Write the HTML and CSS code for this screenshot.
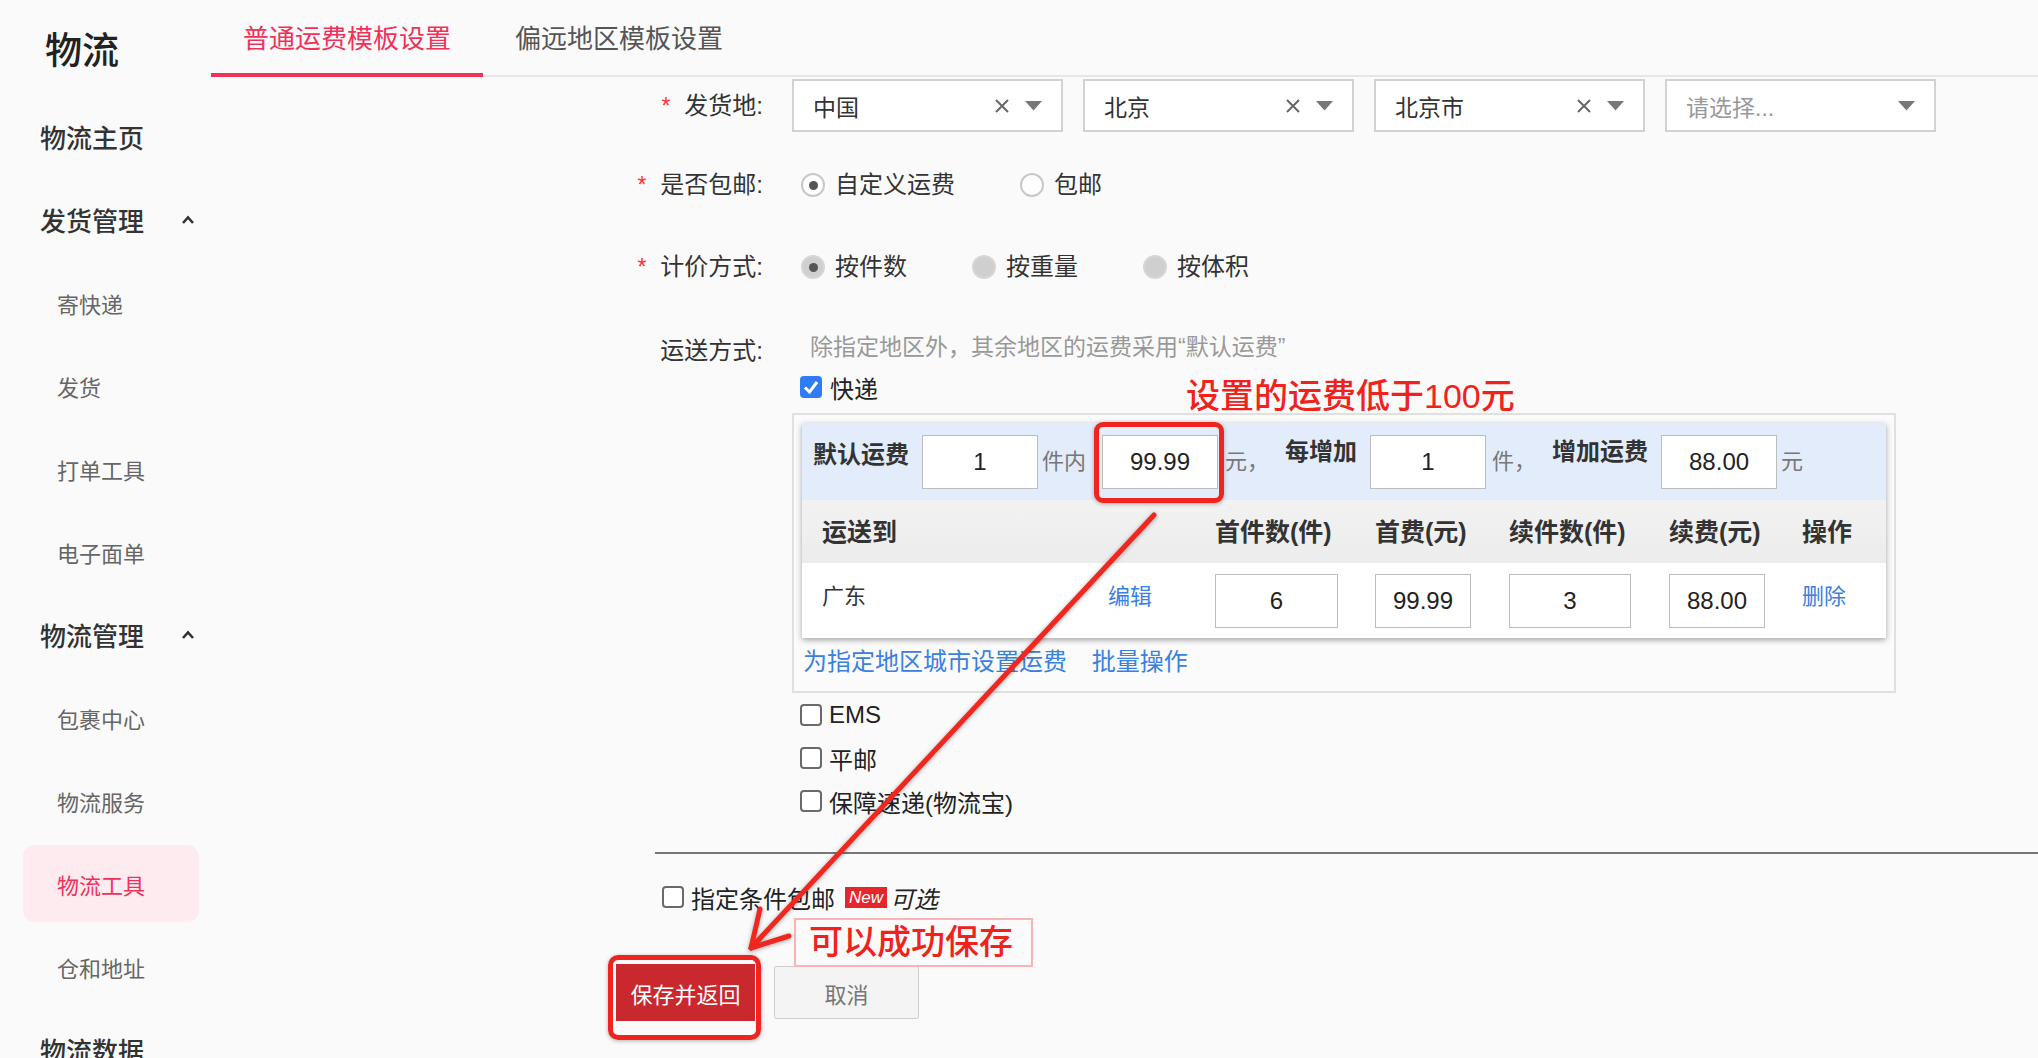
FILE: index.html
```html
<!DOCTYPE html>
<html lang="zh-CN">
<head>
<meta charset="UTF-8">
<meta name="viewport" content="width=device-width, initial-scale=1.0">
<title>物流 - 运费模板设置</title>
<link rel="stylesheet" href="styles.css">
</head>
<body>

<div class="page">
    <aside class="sidebar">
        <div class="side-title">物流</div>
        <div class="nav-item nav-main">物流主页</div>
        <div class="nav-item nav-main">发货管理
            <svg class="caret" width="14" height="10" viewBox="0 0 14 10"><polyline points="2,8 7,2.5 12,8" fill="none" stroke="#333" stroke-width="2.6"/></svg>
        </div>
        <div class="nav-item nav-sub">寄快递</div>
        <div class="nav-item nav-sub">发货</div>
        <div class="nav-item nav-sub">打单工具</div>
        <div class="nav-item nav-sub">电子面单</div>
        <div class="nav-item nav-main">物流管理
            <svg class="caret" width="14" height="10" viewBox="0 0 14 10"><polyline points="2,8 7,2.5 12,8" fill="none" stroke="#333" stroke-width="2.6"/></svg>
        </div>
        <div class="nav-item nav-sub">包裹中心</div>
        <div class="nav-item nav-sub">物流服务</div>
        <div class="nav-item nav-sub active">物流工具</div>
        <div class="nav-item nav-sub">仓和地址</div>
        <div class="nav-item nav-main">物流数据</div>
    </aside>

    <main class="content">
        <div class="tabs">
            <div class="tab active">普通运费模板设置</div>
            <div class="tab">偏远地区模板设置</div>
        </div>

        <div class="form">
            <div class="row row-origin">
                <div class="label"><span class="req">*</span>发货地:</div>
                <div class="selects">
                    <div class="select">
                        <span class="select-text">中国</span>
                        <svg class="clear" width="16" height="16" viewBox="0 0 16 16"><path d="M2 2L14 14M14 2L2 14" stroke="#666" stroke-width="2"/></svg>
                        <svg width="17" height="10" viewBox="0 0 17 10"><polygon points="0,0 17,0 8.5,9.5" fill="#777"/></svg>
                    </div>
                    <div class="select">
                        <span class="select-text">北京</span>
                        <svg class="clear" width="16" height="16" viewBox="0 0 16 16"><path d="M2 2L14 14M14 2L2 14" stroke="#666" stroke-width="2"/></svg>
                        <svg width="17" height="10" viewBox="0 0 17 10"><polygon points="0,0 17,0 8.5,9.5" fill="#777"/></svg>
                    </div>
                    <div class="select">
                        <span class="select-text">北京市</span>
                        <svg class="clear" width="16" height="16" viewBox="0 0 16 16"><path d="M2 2L14 14M14 2L2 14" stroke="#666" stroke-width="2"/></svg>
                        <svg width="17" height="10" viewBox="0 0 17 10"><polygon points="0,0 17,0 8.5,9.5" fill="#777"/></svg>
                    </div>
                    <div class="select">
                        <span class="select-text placeholder">请选择...</span>
                        <svg width="17" height="10" viewBox="0 0 17 10"><polygon points="0,0 17,0 8.5,9.5" fill="#777"/></svg>
                    </div>
                </div>
            </div>

            <div class="row row-radio">
                <div class="label"><span class="req">*</span>是否包邮:</div>
                <div class="radios">
                    <label class="radio-item"><span class="radio checked"></span>自定义运费</label>
                    <label class="radio-item"><span class="radio"></span>包邮</label>
                </div>
            </div>

            <div class="row row-radio">
                <div class="label"><span class="req">*</span>计价方式:</div>
                <div class="radios">
                    <label class="radio-item"><span class="radio disabled checked"></span>按件数</label>
                    <label class="radio-item"><span class="radio disabled"></span>按重量</label>
                    <label class="radio-item"><span class="radio disabled"></span>按体积</label>
                </div>
            </div>

            <div class="row row-ship">
                <div class="label label-ship">运送方式:</div>
                <div class="ship">
                    <div class="hint">除指定地区外，其余地区的运费采用“默认运费”</div>
                    <label class="check-row first">
                        <svg class="checkbox" width="22" height="22" viewBox="0 0 22 22"><rect x="0" y="0" width="22" height="22" rx="4" fill="#2f7cf6"/><path d="M5 11.5L9.5 16L17 6" fill="none" stroke="#fff" stroke-width="3"/></svg>
                        快递
                    </label>

                    <div class="ship-box">
                        <div class="fee-table">
                            <div class="fee-default">
                                <span class="band-title">默认运费</span>
                                <input class="num-input w116" type="text" value="1" readonly>
                                <span class="unit">件内</span>
                                <input class="num-input w116 gap16" type="text" value="99.99" readonly>
                                <span class="unit gap7">元，</span>
                                <span class="band-label">每增加</span>
                                <input class="num-input w116" type="text" value="1" readonly>
                                <span class="unit gap6">件，</span>
                                <span class="band-label">增加运费</span>
                                <input class="num-input w116" type="text" value="88.00" readonly>
                                <span class="unit">元</span>
                            </div>
                            <div class="fee-grid fee-head">
                                <span>运送到</span>
                                <span></span>
                                <span>首件数(件)</span>
                                <span>首费(元)</span>
                                <span>续件数(件)</span>
                                <span>续费(元)</span>
                                <span>操作</span>
                            </div>
                            <div class="fee-grid fee-row">
                                <span class="cell-text">广东</span>
                                <a class="link cell-text">编辑</a>
                                <input class="num-input w123" type="text" value="6" readonly>
                                <input class="num-input w96" type="text" value="99.99" readonly>
                                <input class="num-input w122" type="text" value="3" readonly>
                                <input class="num-input w96" type="text" value="88.00" readonly>
                                <a class="link cell-text">删除</a>
                            </div>
                        </div>
                        <div class="fee-links">
                            <a class="link">为指定地区城市设置运费</a>
                            <a class="link">批量操作</a>
                        </div>
                    </div>

                    <label class="check-row after-box"><span class="box-empty"></span>EMS</label>
                    <label class="check-row"><span class="box-empty"></span>平邮</label>
                    <label class="check-row"><span class="box-empty"></span>保障速递(物流宝)</label>
                </div>
            </div>
        </div>

        <div class="divider"></div>

        <label class="cond-row">
            <span class="box-empty"></span>
            <span class="cond-text">指定条件包邮</span>
            <span class="badge-new">New</span>
            <em class="cond-opt">可选</em>
        </label>

        <div class="actions">
            <button class="btn-save">保存并返回</button>
            <button class="btn-cancel">取消</button>
        </div>
    </main>
</div>

<!-- annotations drawn on top of the screenshot -->
<div class="mark-text">设置的运费低于100元</div>
<div class="mark-box mark-fee"></div>
<div class="mark-box mark-save"></div>
<div class="mark-note">可以成功保存</div>
<svg class="mark-arrow" width="2038" height="1058" viewBox="0 0 2038 1058">
    <g fill="none" stroke="#f1261f" stroke-width="5" stroke-linecap="round" stroke-linejoin="round">
        <path d="M1154 515L751 948"/>
        <path d="M760 909L751 948L789 936"/>
    </g>
</svg>

</body>
</html>
```

FILE: styles.css
```css
body {
    margin: 0;
    width: 2038px;
    height: 1058px;
    overflow: hidden;
    position: relative;
    background-color: #fafafa;
    font-family: "Liberation Sans", "Noto Sans CJK SC", sans-serif;
    color: #333;
}
.page {
    display: flex;
    height: 1058px;
}

/* sidebar */
.sidebar {
    width: 211px;
    flex-shrink: 0;
    box-sizing: border-box;
    padding-left: 23px;
}
.side-title {
    height: 98px;
    box-sizing: border-box;
    padding: 27px 0 0 22px;
    font-size: 37px;
    line-height: 50px;
    font-weight: 500;
    color: #222;
}
.nav-item {
    width: 176px;
    height: 77px;
    margin-bottom: 6px;
    box-sizing: border-box;
    display: flex;
    align-items: center;
    border-radius: 12px;
}
.nav-main {
    padding: 0 4px 0 17px;
    justify-content: space-between;
    font-size: 26px;
    font-weight: 500;
    color: #333;
}
.nav-sub {
    padding-left: 34px;
    font-size: 22px;
    color: #666;
}
.nav-sub.active {
    background-color: #fdebef;
    color: #f0325a;
}

/* tabs */
.content {
    flex: 1;
    min-width: 0;
}
.tabs {
    display: flex;
    border-bottom: 2px solid #e6e6e6;
}
.tab {
    width: 272px;
    height: 77px;
    box-sizing: border-box;
    margin-bottom: -2px;
    padding-top: 22px;
    border-bottom: 4px solid transparent;
    text-align: center;
    font-size: 26px;
    line-height: 34px;
    color: #555;
}
.tab.active {
    color: #f0325a;
    border-bottom-color: #f0325a;
}

/* form */
.form {
    margin-top: 2px;
}
.row {
    display: grid;
    grid-template-columns: 552px 1fr;
    column-gap: 29px;
    align-items: center;
}
.row-origin {
    height: 53px;
}
.row-radio {
    height: 58px;
    margin-top: 24px;
}
.row-ship {
    margin-top: 32px;
    align-items: start;
}
.label {
    text-align: right;
    font-size: 24px;
    line-height: 34px;
    color: #333;
}
.label-ship {
    padding-top: 6px;
}
.req {
    color: #f33;
    font-size: 23px;
    margin-right: 14px;
}

.selects {
    display: flex;
    gap: 20px;
}
.select {
    width: 271px;
    height: 53px;
    box-sizing: border-box;
    border: 2px solid #d2d2d2;
    background-color: #fff;
    display: flex;
    align-items: center;
    padding: 0 19px 0 19px;
    font-size: 23px;
    color: #333;
}
.select-text {
    flex: 1;
}
.placeholder {
    color: #999;
}
.clear {
    margin-right: 15px;
}

.radios {
    display: flex;
    align-items: center;
    padding-left: 9px;
}
.radio-item {
    display: flex;
    align-items: center;
    margin-right: 65px;
    font-size: 24px;
    line-height: 34px;
}
.radio {
    width: 24px;
    height: 24px;
    box-sizing: border-box;
    border: 2px solid #c8c8c8;
    border-radius: 50%;
    background-color: #fff;
    margin-right: 10px;
    display: flex;
    align-items: center;
    justify-content: center;
}
.radio.checked::after {
    content: "";
    width: 9px;
    height: 9px;
    border-radius: 50%;
    background-color: #555;
}
.radio.disabled {
    background-color: #cfcfcf;
    border-color: #d6d6d6;
}

/* shipping methods */
.hint {
    font-size: 23px;
    line-height: 34px;
    color: #999;
    margin-top: 2px;
    padding-left: 18px;
}
.check-row {
    display: flex;
    align-items: center;
    height: 34px;
    margin-top: 9px;
    padding-left: 8px;
    font-size: 24px;
    color: #222;
}
.check-row.first {
    margin-top: 6px;
}
.check-row.after-box {
    margin-top: 5px;
}
.checkbox {
    margin-right: 8px;
}
.box-empty {
    width: 22px;
    height: 22px;
    box-sizing: border-box;
    border: 2px solid #6a6a6a;
    border-radius: 4px;
    background-color: #fff;
    margin-right: 7px;
}

.ship-box {
    width: 1104px;
    box-sizing: border-box;
    margin-top: 9px;
    border: 2px solid #e0e0e0;
    padding: 8px 8px 12px 8px;
    background-color: #fbfbfb;
}
.fee-table {
    background-color: #fff;
    box-shadow: 0 2px 6px rgba(0, 0, 0, 0.35);
}
.fee-default {
    height: 77px;
    box-sizing: border-box;
    padding: 12px 0 0 11px;
    display: flex;
    align-items: flex-start;
    background-color: #e2ecfb;
}
.band-title {
    font-size: 24px;
    line-height: 34px;
    font-weight: bold;
    margin-top: 3px;
    color: #333;
}
.band-label {
    font-size: 24px;
    line-height: 34px;
    font-weight: bold;
    margin-left: 16px;
    color: #333;
}
.unit {
    font-size: 22px;
    line-height: 54px;
    color: #777;
    margin-left: 4px;
}
.unit.gap7 {
    margin-left: 7px;
}
.unit.gap6 {
    margin-left: 6px;
}
.num-input {
    height: 54px;
    box-sizing: border-box;
    border: 1px solid #bdbdbd;
    background-color: #fff;
    text-align: center;
    font-family: "Liberation Sans", sans-serif;
    font-size: 24px;
    color: #222;
    padding: 0;
    outline: none;
}
.fee-default .num-input {
    margin-left: 13px;
}
.fee-default .num-input.gap16 {
    margin-left: 16px;
}
.w116 { width: 116px; }
.w123 { width: 123px; }
.w122 { width: 122px; }
.w96 { width: 96px; }

.fee-grid {
    display: grid;
    grid-template-columns: 286px 107px 160px 134px 160px 133px 1fr;
    padding-left: 20px;
    align-items: center;
    line-height: 34px;
}
.fee-head {
    height: 63px;
    background: linear-gradient(#f2f2f2, #ececec);
    font-size: 25px;
    font-weight: bold;
    color: #333;
}
.fee-row {
    height: 75px;
    font-size: 22px;
    color: #333;
}
.cell-text {
    margin-bottom: 8px;
}
.link {
    color: #3a80e0;
    cursor: pointer;
}
.fee-links {
    margin-top: 7px;
    font-size: 24px;
    line-height: 34px;
    padding-left: 1px;
}
.fee-links .link {
    margin-right: 18px;
}

/* bottom part */
.divider {
    margin: 34px 0 0 444px;
    border-top: 2px solid #777;
}
.cond-row {
    display: flex;
    align-items: center;
    height: 34px;
    margin: 26px 0 0 451px;
    font-size: 24px;
    color: #222;
}
.cond-text {
    margin-right: 10px;
}
.badge-new {
    background-color: #e5262c;
    color: #fff;
    font-size: 17px;
    font-style: italic;
    line-height: 21px;
    padding: 0 4px;
    margin-right: 3px;
}
.cond-opt {
    font-style: italic;
}
.actions {
    display: flex;
    align-items: center;
    gap: 19px;
    margin: 50px 0 0 405px;
}
.btn-save {
    width: 139px;
    height: 57px;
    border: none;
    background-color: #c9282e;
    color: #fff;
    font-family: "Liberation Sans", "Noto Sans CJK SC", sans-serif;
    font-size: 22px;
    cursor: pointer;
}
.btn-cancel {
    width: 145px;
    height: 53px;
    border: 1px solid #cfcfcf;
    border-radius: 2px;
    background-color: #f4f4f4;
    color: #777;
    font-family: "Liberation Sans", "Noto Sans CJK SC", sans-serif;
    font-size: 22px;
    cursor: pointer;
}

/* annotations */
.mark-text {
    position: absolute;
    left: 1186px;
    top: 379px;
    font-size: 34px;
    line-height: 34px;
    font-weight: 500;
    color: #f0221c;
}
.mark-box {
    position: absolute;
    box-sizing: border-box;
    border: 5px solid #f0241e;
    border-radius: 9px;
    box-shadow: 0 1px 4px rgba(0, 0, 0, 0.3);
}
.mark-fee {
    left: 1094px;
    top: 422px;
    width: 130px;
    height: 81px;
}
.mark-save {
    left: 608px;
    top: 955px;
    width: 153px;
    height: 85px;
    border-radius: 10px;
}
.mark-note {
    position: absolute;
    left: 794px;
    top: 918px;
    width: 239px;
    height: 49px;
    box-sizing: border-box;
    border: 2px solid #f9b3b3;
    padding-left: 13px;
    font-size: 34px;
    line-height: 45px;
    font-weight: 500;
    color: #f0221c;
}
.mark-arrow {
    position: absolute;
    left: 0;
    top: 0;
    pointer-events: none;
    filter: drop-shadow(0 1px 2px rgba(0, 0, 0, 0.35));
}
```
